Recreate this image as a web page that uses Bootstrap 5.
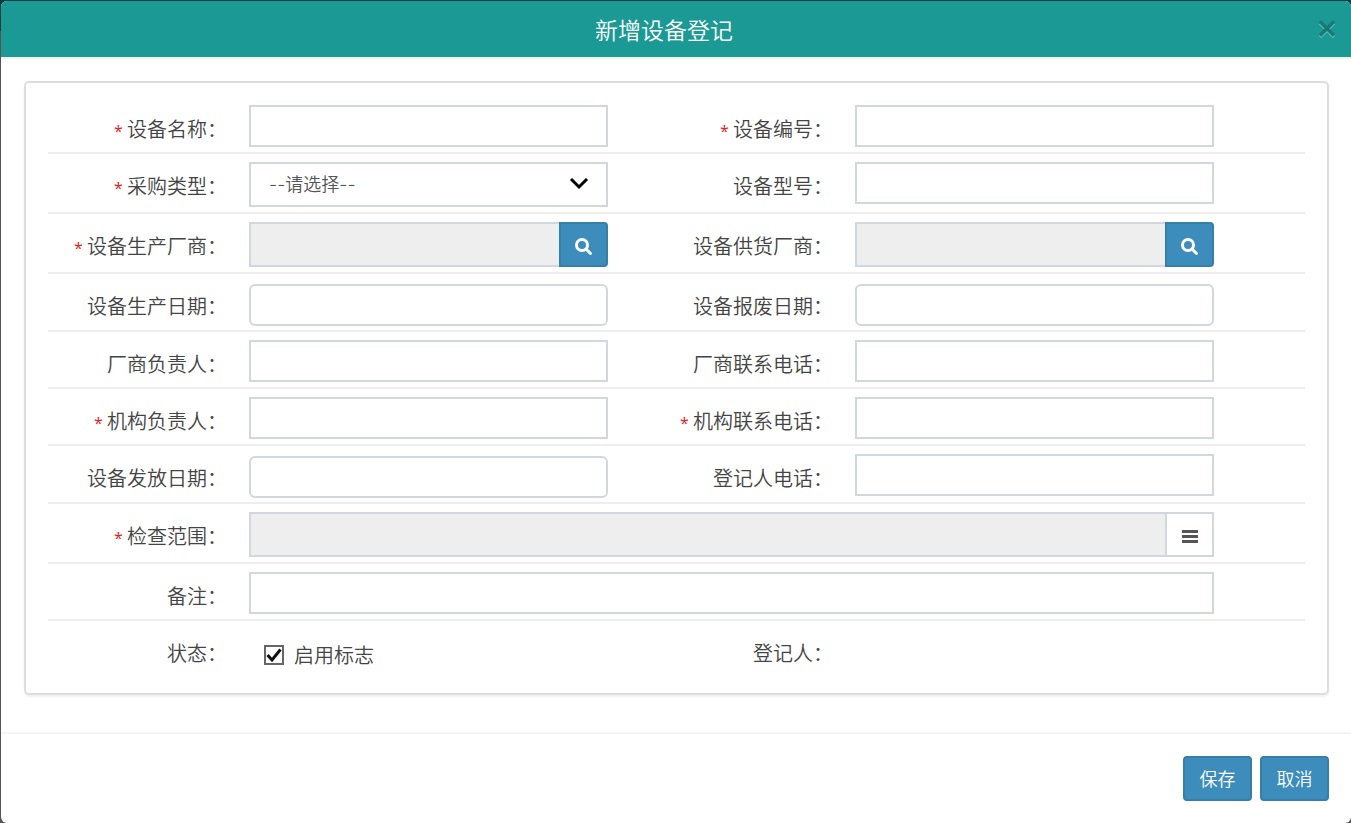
<!DOCTYPE html>
<html lang="zh-CN">
<head>
<meta charset="utf-8">
<meta name="viewport" content="width=device-width, initial-scale=1">
<title>新增设备登记</title>
<link href="https://cdn.jsdelivr.net/npm/bootstrap@5.3.0/dist/css/bootstrap.min.css" rel="stylesheet">
<style>
  body { font-family: "Noto Sans CJK SC", sans-serif; font-weight: 350; font-size: 20px; color: #444;
    background: linear-gradient(#0b3c40 0 31px, #555 31px); }
  .dialog { margin: 1px 0 0 1px; background: #fff; border-radius: 6px; overflow: hidden; }
  .dialog-head { background: #1a9995; color: #fff; height: 56px; padding-right: 24px; }
  .dialog-head h1 { font-size: 23px; line-height: 28px; font-weight: 350; }
  .close-x { right: 14px; top: 18px; width: 20px; height: 20px; }
  .dialog-main { border-top: 2px solid #f4f4f4; border-bottom: 2px solid #f4f4f4; padding: 22px 22px 37px 23px; }
  .panel { border: 2px solid #ddd; border-radius: 5px; padding: 14px 22px 0; box-shadow: 0 2px 2px rgba(0,0,0,.06); }
  .form-line { display: grid; grid-template-columns: 201fr 359fr 247fr 359fr 91fr; align-items: start;
    padding: 8px 0 5px; border-bottom: 2px solid #eee; }
  .form-line:last-child { border-bottom: 0; padding-bottom: 24px; }
  .form-line > label, .form-line > .caption { text-align: right; padding: 10px 22px 0 0; line-height: 28px; white-space: nowrap; }
  .required::before { content: "* "; color: #e62020; font-family: "Open Sans", sans-serif; font-weight: 400; font-size: 16px; }
  .span-wide { grid-column: 2 / 5; }
  .form-control, .form-select { border: 2px solid #d2d6de; border-radius: 0; height: 42px; font-size: 18px; color: #555; padding: 0 18px; }
  .form-select { height: 45px; font-family: Inter, "Noto Sans CJK SC", sans-serif; font-weight: 350; background-size: 20px 14px; background-position: right 17px center;
    background-image: url("data:image/svg+xml,%3Csvg xmlns='http://www.w3.org/2000/svg' viewBox='0 0 20 14'%3E%3Cpath d='M2 1l8 8 8-8' fill='none' stroke='%23000' stroke-width='3'/%3E%3C/svg%3E"); }
  .input-group .form-control { height: 45px; border-right-width: 1px; }
  .form-control:disabled, .form-control[readonly] { background: #eee; }
  .date-box { border-radius: 6px; margin: 2px 0 -1px; }
  .btn { --bs-btn-border-width: 2px; --bs-btn-border-radius: 4px; height: 45px; font-size: 18px; line-height: 27px; font-weight: 350; }
  .btn-blue { --bs-btn-bg: #3c8dbc; --bs-btn-border-color: #367fa9; --bs-btn-color: #fff;
    --bs-btn-hover-bg: #367fa9; --bs-btn-hover-color: #fff; --bs-btn-hover-border-color: #367fa9; }
  .input-group .btn { width: 49px; padding: 0; }
  .input-group .btn-list { --bs-btn-bg: #fff; --bs-btn-border-color: #d2d6de; --bs-btn-color: #444; --bs-btn-border-radius: 0; }
  .form-check-input.enable-box { width: 20px; height: 20px; margin: 0; border: 2px solid #666; border-radius: 0; }
  .enable-box:checked { background-color: #fff; background-size: 100%;
    background-image: url("data:image/svg+xml,%3Csvg xmlns='http://www.w3.org/2000/svg' viewBox='0 0 16 16'%3E%3Cpath d='M1.500 8l4.500 5L14.500 2.500' fill='none' stroke='%23111' stroke-width='3'/%3E%3C/svg%3E"); }
  .enable-wrap { padding: 12px 0 0 15px; line-height: 28px; gap: 10px; }
  .dialog-foot { padding: 22px; }
  .dialog-foot .btn { width: 69px; padding: 0; }
</style>
</head>
<body>
<form class="dialog">
  <header class="dialog-head position-relative d-flex align-items-center justify-content-center">
    <h1 class="m-0">新增设备登记</h1>
    <button type="button" class="close-x position-absolute border-0 bg-transparent p-0 d-flex" aria-label="关闭">
      <svg width="20" height="20" viewBox="0 0 20 20" fill="none" stroke-width="3.500"><path d="M3 4l14 14M17 4L3 18" stroke="#5fb9b5"/><path d="M3 2.500l14 14M17 2.500L3 16.500" stroke="#177a77"/></svg>
    </button>
  </header>
  <main class="dialog-main">
    <div class="panel">
      <div class="form-line">
        <label class="required" for="name">设备名称：</label><input id="name" type="text" class="form-control">
        <label class="required" for="code">设备编号：</label><input id="code" type="text" class="form-control">
      </div>
      <div class="form-line">
        <label class="required" for="kind">采购类型：</label><select id="kind" class="form-select"><option>--请选择--</option></select>
        <label for="model">设备型号：</label><input id="model" type="text" class="form-control">
      </div>
      <div class="form-line">
        <label class="required" for="maker">设备生产厂商：</label>
        <div class="input-group"><input id="maker" type="text" class="form-control" readonly><button type="button" class="btn btn-blue" aria-label="查找生产厂商"><svg width="18" height="18" viewBox="0 0 18 18" fill="none" stroke="#fff" stroke-width="3"><circle cx="7" cy="7" r="5.500"/><path d="M11 11l4.500 4.500" stroke-linecap="round"/></svg></button></div>
        <label for="vendor">设备供货厂商：</label>
        <div class="input-group"><input id="vendor" type="text" class="form-control" readonly><button type="button" class="btn btn-blue" aria-label="查找供货厂商"><svg width="18" height="18" viewBox="0 0 18 18" fill="none" stroke="#fff" stroke-width="3"><circle cx="7" cy="7" r="5.500"/><path d="M11 11l4.500 4.500" stroke-linecap="round"/></svg></button></div>
      </div>
      <div class="form-line">
        <label for="made">设备生产日期：</label><input id="made" type="text" class="form-control date-box">
        <label for="scrap">设备报废日期：</label><input id="scrap" type="text" class="form-control date-box">
      </div>
      <div class="form-line">
        <label for="makerHead">厂商负责人：</label><input id="makerHead" type="text" class="form-control">
        <label for="makerTel">厂商联系电话：</label><input id="makerTel" type="text" class="form-control">
      </div>
      <div class="form-line">
        <label class="required" for="orgHead">机构负责人：</label><input id="orgHead" type="text" class="form-control">
        <label class="required" for="orgTel">机构联系电话：</label><input id="orgTel" type="text" class="form-control">
      </div>
      <div class="form-line">
        <label for="issued">设备发放日期：</label><input id="issued" type="text" class="form-control date-box">
        <label for="regTel">登记人电话：</label><input id="regTel" type="text" class="form-control">
      </div>
      <div class="form-line">
        <label class="required" for="scope">检查范围：</label>
        <div class="input-group span-wide"><input id="scope" type="text" class="form-control" readonly><button type="button" class="btn btn-list" aria-label="选择检查范围"><svg width="16" height="14" viewBox="0 0 16 14" fill="#555"><path d="M0 0h16v3H0zM0 5h16v3H0zM0 10h16v3H0z"/></svg></button></div>
      </div>
      <div class="form-line">
        <label for="note">备注：</label><input id="note" type="text" class="form-control span-wide">
      </div>
      <div class="form-line">
        <span class="caption">状态：</span>
        <div class="enable-wrap d-flex align-items-center"><input id="enabled" type="checkbox" class="form-check-input enable-box" checked><label for="enabled">启用标志</label></div>
        <span class="caption">登记人：</span>
      </div>
    </div>
  </main>
  <footer class="dialog-foot d-flex justify-content-end gap-2">
    <button type="submit" class="btn btn-blue">保存</button>
    <button type="button" class="btn btn-blue">取消</button>
  </footer>
</form>
<script src="https://cdn.jsdelivr.net/npm/bootstrap@5.3.0/dist/js/bootstrap.bundle.min.js"></script>
</body>
</html>
